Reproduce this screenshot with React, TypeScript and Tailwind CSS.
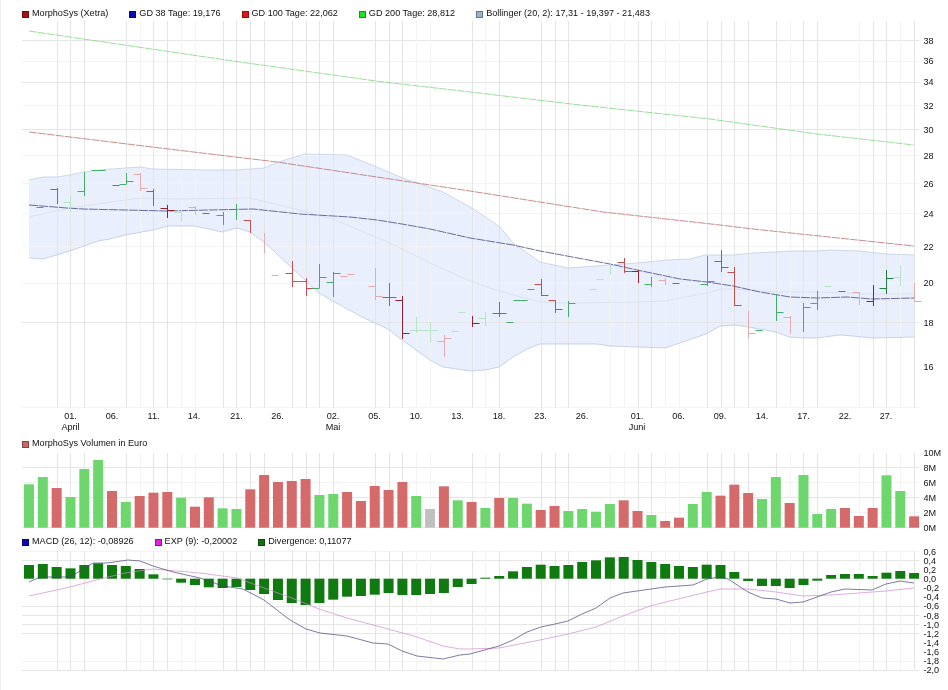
const X = (i: number) => Math.round(29 + 13.83 * i) + 0.5;
const pts = (a: number[][]) => a.map((p) => p.join(",")).join(" ");

const strongV = [2, 3, 4, 7, 9, 10, 14, 15, 16, 17, 19, 20, 21, 22, 25, 26, 27, 32, 34, 37, 38, 39, 44, 45, 49, 50, 51, 52, 54, 56, 57, 61, 62, 64];
const faintV = [8, 11, 12, 28, 29, 33, 42, 43, 46, 47, 55, 60, 63];

const upper = [[29,180],[43,177],[56,177],[70,175],[84,172],[98,170],[125,168],[140,167],[153,169],[210,170],[236,170],[264,168],[278,162],[305,154],[347,155],[367,163],[403,178],[443,192],[470,207],[490,220],[500,227],[513,243],[540,262],[568,268],[610,265],[637,263],[667,260],[690,259],[705,255],[733,255],[753,253],[793,251],[817,251],[830,250],[860,251],[887,254],[914,255]];
const lower = [[29,258],[43,259],[70,251],[98,241],[110,239],[125,235],[153,230],[168,226],[195,226],[222,232],[237,228],[250,232],[264,242],[292,268],[319,293],[333,301],[362,317],[388,329],[402,340],[430,360],[443,367],[470,371],[485,370],[499,367],[513,357],[527,349],[540,344],[568,344],[597,344],[610,346],[637,347],[665,348],[706,334],[720,326],[735,325],[748,327],[776,332],[789,337],[803,338],[817,338],[840,335],[853,336],[872,338],[914,337]];
const mid = [[29,217],[70,208],[125,200],[143,198],[177,199],[250,198],[287,207],[333,219],[347,225],[388,242],[430,263],[470,281],[499,291],[540,302],[570,303],[637,302],[665,301],[707,293],[720,289],[733,289],[776,292],[817,292],[872,294],[914,294]];
const gd38 = [[29,205],[67,208],[83,209],[167,211],[253,209],[300,214],[350,217],[377,220],[402,224],[430,229],[470,238],[513,245],[540,251],[610,264],[637,270],[680,279],[707,282],[733,286],[760,292],[790,297],[817,298],[847,297],[872,299],[914,298]];
const gd100 = [[29,132],[160,148],[277,162],[470,191],[603,212],[720,225],[753,229],[914,246]];
const gd200 = [[29,31],[233,61],[383,82],[470,92],[580,105],[710,119],[817,134],[914,145]];

type Bar = [number, number, number, number, number, "r" | "g", number];
const bars: Bar[] = [
  [1,0,0,207,0,"g",2],[2,188,204,189,0,"r",2],[3,196,212,202,0,"g",1],[4,172,196,191,0,"g",2],[5,0,0,170,170,"g",2],
  [6,0,0,0,185,"r",2],[7,173,184,184,181,"g",2],[8,173,191,174,188,"r",1],[9,189,206,191,0,"r",2],[10,205,218,208,210,"r",3],
  [11,210,222,212,0,"g",1],[12,206,215,207,0,"r",1],[13,0,0,213,0,"r",2],[14,212,225,215,0,"g",2],[15,204,220,0,0,"g",2],
  [16,220,233,220,0,"r",2],[17,233,253,0,0,"r",1],[18,0,0,275,0,"r",1],[19,261,287,273,281,"r",2],[20,278,296,281,288,"r",2],
  [21,264,288,288,277,"g",2],[22,272,297,282,273,"g",2],[23,0,0,276,274,"r",1],[25,268,300,286,296,"r",1],[26,283,306,297,297,"r",2],
  [27,296,339,300,333,"r",3],[28,317,333,330,330,"g",1],[29,322,343,330,330,"g",1],[30,335,357,341,338,"r",1],[31,0,0,331,312,"g",1],
  [32,316,327,0,323,"r",3],[33,312,326,318,0,"g",1],[34,302,317,313,313,"r",2],[35,0,0,322,300,"g",2],[36,0,0,300,289,"g",2],
  [37,279,296,284,295,"r",2],[38,300,313,300,309,"r",2],[39,301,317,0,303,"g",2],[41,0,0,289,279,"g",1],[42,263,275,0,0,"g",1],
  [43,258,273,262,271,"r",2],[44,270,283,271,0,"r",3],[45,277,287,284,0,"g",2],[46,278,285,280,0,"r",1],[47,0,0,283,0,"r",2],
  [49,256,286,284,281,"g",2],[50,250,272,261,267,"r",2],[51,267,306,272,305,"r",2],[52,311,338,0,333,"r",1],[53,0,0,330,0,"g",2],
  [54,294,321,0,312,"g",2],[55,316,334,317,0,"r",1],[56,303,332,0,307,"g",2],[57,291,310,303,0,"g",2],[58,0,0,286,0,"g",1],
  [59,0,0,291,0,"r",2],[60,292,305,292,0,"r",1],[61,285,306,301,0,"r",3],[62,270,294,288,278,"g",3],[63,265,286,277,0,"g",1],[64,283,302,0,301,"r",1],
];
const barColor = (c: "r" | "g", s: number) =>
  c === "r" ? (s === 3 ? "#922030" : s === 2 ? "#c25050" : "#e3abab") : s === 3 ? "#1f8040" : s === 2 ? "#45ad68" : "#b8e4c4";

const vol: [number, "r" | "g" | "x"][] = [
  [148,"g"],[126,"g"],[159,"r"],[186,"g"],[102,"g"],[75,"g"],[168,"r"],[201,"g"],[183,"r"],[173,"r"],[171,"r"],[188,"g"],[215,"r"],[187,"r"],[220,"g"],[222,"g"],[163,"r"],[120,"r"],[141,"r"],[138,"r"],[132,"r"],[180,"g"],[177,"g"],[171,"r"],[198,"r"],[153,"r"],[165,"r"],[141,"r"],[183,"g"],[222,"x"],[154,"r"],[196,"g"],[201,"r"],[219,"g"],[189,"r"],[189,"g"],[206,"g"],[225,"r"],[213,"r"],[228,"g"],[222,"g"],[230,"g"],[207,"g"],[196,"r"],[228,"r"],[240,"g"],[258,"r"],[248,"r"],[207,"g"],[171,"g"],[182,"r"],[149,"r"],[174,"r"],[192,"g"],[126,"g"],[204,"r"],[120,"g"],[237,"g"],[222,"g"],[219,"r"],[243,"r"],[219,"r"],[121,"g"],[168,"g"],[244,"r"],
];
const volFill = { r: "#d46a6a", g: "#6dd66d", x: "#c0c0c0" };

const div = [105,102,111,115,105,100,105,108,117,133,148,158,165,172,174,171,180,192,210,219,225,219,209,200,198,194,189,195,195,192,189,171,162,143,138,124,111,104,108,105,96,91,82,81,90,96,102,108,111,104,105,126,153,168,168,174,165,152,135,132,132,138,128,123,129];
const macd = [[29,582],[38,578],[47,577],[70,577],[85,568],[93,563],[107,563],[128,560],[140,561],[153,566],[173,572],[200,578],[223,586],[243,589],[264,600],[290,620],[306,629],[320,633],[347,636],[373,643],[388,644],[402,651],[417,656],[443,659],[460,655],[470,654],[499,646],[513,640],[527,632],[541,627],[555,624],[568,621],[582,614],[596,608],[610,598],[623,593],[637,591],[665,587],[693,585],[707,579],[720,577],[728,579],[748,592],[762,598],[776,599],[790,603],[803,602],[817,597],[831,592],[845,589],[872,590],[886,584],[900,581],[914,583]];
const exp = [[29,596],[70,587],[100,579],[125,573],[153,569],[200,573],[237,578],[264,588],[292,598],[319,609],[347,618],[388,629],[417,637],[443,646],[460,649],[470,649],[499,648],[540,640],[568,634],[596,627],[623,616],[650,606],[678,599],[707,592],[720,589],[748,589],[776,592],[803,596],[831,595],[859,593],[886,591],[914,588]];

const days: [string, number][] = [["01.",70.5],["06.",112],["11.",153.5],["14.",194],["21.",236.5],["26.",277.5],["02.",333],["05.",374.5],["10.",416],["13.",457.5],["18.",499],["23.",540.5],["26.",582],["01.",637],["06.",678.5],["09.",720],["14.",762],["17.",803.5],["22.",845],["27.",886]];
const months: [string, number][] = [["April",70.5],["Mai",333],["Juni",637]];

const priceAxis: [string, number][] = [["38",40.5],["36",61],["34",82],["32",105.5],["30",129.5],["28",155.5],["26",183.5],["24",213.5],["22",246.5],["20",283],["18",322.5],["16",367]];
const volAxis: [string, number][] = [["10M",452.7],["8M",468],["6M",483],["4M",498],["2M",513],["0M",527.7]];
const macdAxis: [string, number][] = [["0,6",551.5],["0,4",560.5],["0,2",569.7],["0,0",578.5],["-0,2",588],["-0,4",597],["-0,6",606],["-0,8",615.5],["-1,0",625],["-1,2",634],["-1,4",643],["-1,6",652],["-1,8",661],["-2,0",670]];

function VGrid({ top, bottom }: { top: number; bottom: number }) {
  return (
    <g>
      {faintV.map((i) => (
        <line key={`f${i}`} x1={X(i)} x2={X(i)} y1={top} y2={bottom} stroke="#f3f3f3" />
      ))}
      {strongV.map((i) => (
        <line key={`s${i}`} x1={X(i)} x2={X(i)} y1={top} y2={bottom} stroke="#e4e4e4" />
      ))}
    </g>
  );
}

function HGrid({ strong, faint }: { strong: number[]; faint: number[] }) {
  return (
    <g>
      {faint.map((y) => (
        <line key={`f${y}`} x1={22} x2={919} y1={y} y2={y} stroke="#f4f4f4" />
      ))}
      {strong.map((y) => (
        <line key={`s${y}`} x1={22} x2={919} y1={y} y2={y} stroke="#e6e6e6" />
      ))}
    </g>
  );
}

function Axis({ items }: { items: [string, number][] }) {
  return (
    <g>
      {items.map(([t, y]) => (
        <text key={t} x={923.5} y={y + 3.3} className="fill-[#111] text-[9.1px]">
          {t}
        </text>
      ))}
    </g>
  );
}

function MainChart() {
  return (
    <svg width={948} height={416} viewBox="0 21 948 416" className="block shrink-0 overflow-visible">
      <polygon points={pts([...upper, ...[...lower].reverse()])} fill="#e9effc" />
      <HGrid strong={[40.5, 82.5, 129.5, 322.5]} faint={[61.5, 105.5, 155.5, 183.5, 213.5, 246.5, 283.5, 407.5]} />
      <VGrid top={21} bottom={408} />
      <polyline points={pts(upper)} fill="none" stroke="#bccadf" strokeWidth={0.7} />
      <polyline points={pts(lower)} fill="none" stroke="#b4c3da" strokeWidth={0.7} />
      <polyline points={pts(mid)} fill="none" stroke="#d5deee" strokeWidth={0.8} />
      <polyline points={pts(gd200)} fill="none" stroke="#7ed87e" strokeWidth={0.8} strokeDasharray="8 1" />
      <polyline points={pts(gd100)} fill="none" stroke="#bd7070" strokeWidth={0.8} strokeDasharray="8 1" />
      <polyline points={pts(gd38)} fill="none" stroke="#4a4a85" strokeWidth={0.8} strokeDasharray="9 1" />
      {bars.map(([i, hi, lo, l, r, c, s]) => {
        const x = X(i);
        const col = barColor(c, s);
        return (
          <g key={i} stroke={col}>
            {hi > 0 && <line x1={x} x2={x} y1={hi} y2={lo} />}
            {l > 0 && <line x1={x - 7} x2={x} y1={l + 0.5} y2={l + 0.5} />}
            {r > 0 && <line x1={x} x2={x + 7} y1={r + 0.5} y2={r + 0.5} />}
          </g>
        );
      })}
      <Axis items={priceAxis} />
      <g className="fill-[#111] text-[9.1px]" textAnchor="middle">
        {days.map(([t, x], k) => (
          <text key={k} x={x} y={418.5}>
            {t}
          </text>
        ))}
        {months.map(([t, x]) => (
          <text key={t} x={x} y={429.5}>
            {t}
          </text>
        ))}
      </g>
    </svg>
  );
}

function VolumeChart() {
  return (
    <svg width={948} height={84} viewBox="0 451 948 84" className="block shrink-0 overflow-visible">
      <HGrid strong={[467.5, 497.5, 527.5]} faint={[482.5, 512.5]} />
      <VGrid top={453} bottom={528} />
      {vol.map(([w, c], i) => {
        const y = 435 + w / 3;
        return <rect key={i} x={29 + 13.83 * i - 5} y={y} width={10} height={527.7 - y} fill={volFill[c]} />;
      })}
      <Axis items={volAxis} />
    </svg>
  );
}

function MacdChart() {
  return (
    <svg width={948} height={141} viewBox="0 549 948 141" className="block shrink-0 overflow-visible">
      <HGrid strong={[560.5, 606.5, 615.5, 624.5, 633.5, 670.5]} faint={[551.5, 578.5, 661.5]} />
      <VGrid top={551} bottom={670} />
      {div.map((w, i) => {
        const v = 530 + w / 3;
        const z = 578.7;
        return <rect key={i} x={29 + 13.83 * i - 5} y={Math.min(v, z)} width={10} height={Math.abs(v - z)} fill="#0f7a0f" />;
      })}
      <polyline points={pts(exp)} fill="none" stroke="#d08ad0" strokeWidth={0.7} />
      <polyline points={pts(macd)} fill="none" stroke="#45457a" strokeWidth={0.7} />
      <Axis items={macdAxis} />
    </svg>
  );
}

function Legend({ items }: { items: [string, string][] }) {
  return (
    <div className="flex h-[14px] shrink-0 items-center gap-[21px] pl-[22px] text-[9.1px] leading-none text-[#111]">
      {items.map(([c, t]) => (
        <div key={t} className="flex items-center gap-[3px] whitespace-nowrap">
          <span className="size-[7px] border border-[#00000055]" style={{ backgroundColor: c }} />
          <span>{t}</span>
        </div>
      ))}
    </div>
  );
}

export default function App() {
  return (
    <div className="flex h-[690px] w-[948px] flex-col overflow-hidden bg-white pt-[7px] font-['Liberation_Sans',Arial,sans-serif] shadow-[inset_1px_0_0_#eeeeee] blur-[0.3px]">
      <Legend
        items={[
          ["#a01414", "MorphoSys (Xetra)"],
          ["#0a0ab0", "GD 38 Tage: 19,176"],
          ["#e01414", "GD 100 Tage: 22,062"],
          ["#22e022", "GD 200 Tage: 28,812"],
          ["#9ab0d2", "Bollinger (20, 2): 17,31 - 19,397 - 21,483"],
        ]}
      />
      <MainChart />
      <Legend items={[["#cc6666", "MorphoSys Volumen in Euro"]]} />
      <VolumeChart />
      <Legend
        items={[
          ["#0a0ab0", "MACD (26, 12): -0,08926"],
          ["#e020e0", "EXP (9): -0,20002"],
          ["#107010", "Divergence: 0,11077"],
        ]}
      />
      <MacdChart />
    </div>
  );
}
